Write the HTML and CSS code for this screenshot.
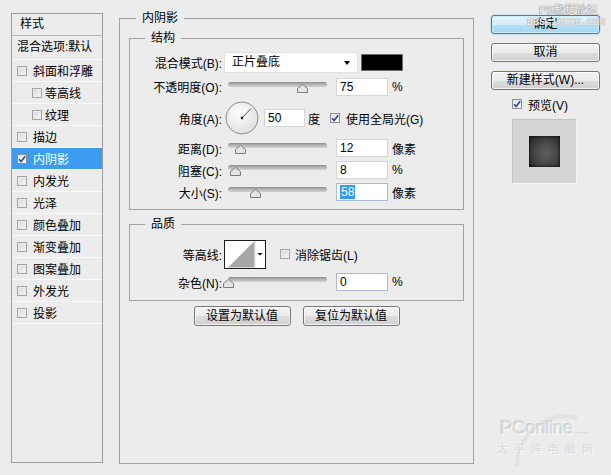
FILE: index.html
```html
<!DOCTYPE html>
<html lang="zh-CN">
<head>
<meta charset="utf-8">
<title>图层样式</title>
<link rel="stylesheet" href="styles.css">
</head>
<body>
<div class="dialog">
  <div class="styles-list">
    <div class="list-head">样式</div>
    <div class="list-blend">混合选项:默认</div>
    <div class="list-item"><span class="cb"></span>斜面和浮雕</div>
    <div class="list-item sub"><span class="cb"></span>等高线</div>
    <div class="list-item sub"><span class="cb"></span>纹理</div>
    <div class="list-item"><span class="cb"></span>描边</div>
    <div class="list-item active"><span class="cb on"><svg width="8" height="8" viewBox="0 0 8 8"><path d="M1 4.2 L3.1 6.6 L7.2 1.2" fill="none" stroke="#2b4a80" stroke-width="1.6"/></svg></span>内阴影</div>
    <div class="list-item"><span class="cb"></span>内发光</div>
    <div class="list-item"><span class="cb"></span>光泽</div>
    <div class="list-item"><span class="cb"></span>颜色叠加</div>
    <div class="list-item"><span class="cb"></span>渐变叠加</div>
    <div class="list-item"><span class="cb"></span>图案叠加</div>
    <div class="list-item"><span class="cb"></span>外发光</div>
    <div class="list-item"><span class="cb"></span>投影</div>
  </div>

  <fieldset class="group main">
    <legend>内阴影</legend>
    <fieldset class="group structure">
      <legend>结构</legend>
      <div class="row r-blend">
        <span class="lbl">混合模式(B):</span>
        <div class="select">正片叠底<span class="arrow"></span></div>
        <div class="swatch"></div>
      </div>
      <div class="row r-opacity">
        <span class="lbl">不透明度(O):</span>
        <div class="slider"><span class="thumb" style="left:69px"><svg width="11" height="9" viewBox="0 0 11 9"><path d="M0.5 8.5V4.5L5.5 0.5L10.5 4.5V8.5Z" fill="#e4e4e4" stroke="#7c7c7c"/></svg></span></div>
        <div class="field">75</div>
        <span class="unit">%</span>
      </div>
      <div class="row r-angle">
        <span class="lbl">角度(A):</span>
        <svg class="dial" width="34" height="34" viewBox="0 0 34 34">
          <defs>
            <radialGradient id="dialfill" cx="40%" cy="35%" r="70%">
              <stop offset="0" stop-color="#ffffff"/>
              <stop offset="1" stop-color="#dedede"/>
            </radialGradient>
          </defs>
          <circle cx="17" cy="17" r="16" fill="url(#dialfill)" stroke="#8c8c8c"/>
          <line x1="17" y1="17" x2="26" y2="7.5" stroke="#555" stroke-width="1"/>
          <circle cx="17" cy="17" r="1.4" fill="#333"/>
        </svg>
        <div class="field angle">50</div>
        <span class="unit deg">度</span>
        <span class="cb on global"><svg width="8" height="8" viewBox="0 0 8 8"><path d="M1 4.2 L3.1 6.6 L7.2 1.2" fill="none" stroke="#2b4a80" stroke-width="1.6"/></svg></span>
        <span class="cb-text">使用全局光(G)</span>
      </div>
      <div class="row r-slider">
        <span class="lbl">距离(D):</span>
        <div class="slider"><span class="thumb" style="left:7px"><svg width="11" height="9" viewBox="0 0 11 9"><path d="M0.5 8.5V4.5L5.5 0.5L10.5 4.5V8.5Z" fill="#e4e4e4" stroke="#7c7c7c"/></svg></span></div>
        <div class="field">12</div>
        <span class="unit">像素</span>
      </div>
      <div class="row r-slider">
        <span class="lbl">阻塞(C):</span>
        <div class="slider"><span class="thumb" style="left:2px"><svg width="11" height="9" viewBox="0 0 11 9"><path d="M0.5 8.5V4.5L5.5 0.5L10.5 4.5V8.5Z" fill="#e4e4e4" stroke="#7c7c7c"/></svg></span></div>
        <div class="field">8</div>
        <span class="unit">%</span>
      </div>
      <div class="row r-slider">
        <span class="lbl">大小(S):</span>
        <div class="slider"><span class="thumb" style="left:22px"><svg width="11" height="9" viewBox="0 0 11 9"><path d="M0.5 8.5V4.5L5.5 0.5L10.5 4.5V8.5Z" fill="#e4e4e4" stroke="#7c7c7c"/></svg></span></div>
        <div class="field focus"><span class="sel">58</span></div>
        <span class="unit">像素</span>
      </div>
    </fieldset>

    <fieldset class="group quality">
      <legend>品质</legend>
      <div class="row r-contour">
        <span class="lbl">等高线:</span>
        <svg class="contour" width="42" height="29" viewBox="0 0 42 29">
          <rect x="0.5" y="0.5" width="41" height="28" fill="#fff" stroke="#1c1c1c"/>
          <path d="M4 27.5 L30.5 1 L30.5 27.5 Z" fill="#a6a6a6"/>
          <line x1="31" y1="1" x2="31" y2="28" stroke="#d8d8d8"/>
          <path d="M33.5 13 H38.5 L36 15.5 Z" fill="#000"/>
        </svg>
        <span class="cb aa"></span>
        <span class="cb-text">消除锯齿(L)</span>
      </div>
      <div class="row r-noise">
        <span class="lbl">杂色(N):</span>
        <div class="slider"><span class="thumb" style="left:-5px"><svg width="11" height="9" viewBox="0 0 11 9"><path d="M0.5 8.5V4.5L5.5 0.5L10.5 4.5V8.5Z" fill="#e4e4e4" stroke="#7c7c7c"/></svg></span></div>
        <div class="field focus">0</div>
        <span class="unit">%</span>
      </div>
    </fieldset>

    <div class="reset-row">
      <button class="btn small">设置为默认值</button>
      <button class="btn small">复位为默认值</button>
    </div>
  </fieldset>

  <div class="side">
    <button class="btn default">确定</button>
    <button class="btn">取消</button>
    <button class="btn">新建样式(W)...</button>
    <div class="preview-row"><span class="cb on"><svg width="8" height="8" viewBox="0 0 8 8"><path d="M1 4.2 L3.1 6.6 L7.2 1.2" fill="none" stroke="#2b4a80" stroke-width="1.6"/></svg></span><span class="cb-text">预览(V)</span></div>
    <div class="preview-box"><div class="preview-swatch"></div></div>
  </div>
</div>

<div class="wm-ps">PS教程论坛</div>
<div class="wm-bbs">BBS.16XX8.COM</div>
<div class="wm-pc">
  <svg class="wm-arc" width="110" height="60" viewBox="0 0 110 60"><path d="M20 58 C 20 20, 60 2, 80 10" fill="none" stroke="#e2e2e2" stroke-width="4"/></svg>
  <div class="wm-pc-name">PConline<span class="dots">......</span></div>
  <div class="wm-pc-cn">太平洋电脑网</div>
</div>
</body>
</html>
```

FILE: styles.css
```css
* { box-sizing: border-box; }
html, body { margin: 0; padding: 0; }
body {
  width: 611px;
  height: 475px;
  overflow: hidden;
  position: relative;
  background: #ececec;
  font-family: "Liberation Sans", "Noto Sans CJK SC", sans-serif;
  font-size: 12px;
  color: #000;
}

.dialog {
  display: flex;
  align-items: flex-start;
  padding-left: 11px;
}

/* ---------- left list ---------- */
.styles-list {
  flex: none;
  margin-top: 13px;
  width: 92px;
  height: 450px;
  border: 1px solid #9d9d9d;
  background: #ececec;
}
.list-head {
  height: 22px;
  line-height: 21px;
  padding-left: 8px;
  border-bottom: 1px solid #b4b4b4;
}
.list-blend {
  height: 24px;
  line-height: 23px;
  padding-left: 5px;
  border-bottom: 1px solid #f9f9f9;
  white-space: nowrap;
}
.list-item {
  height: 22px;
  display: flex;
  align-items: center;
  padding-left: 5px;
  border-bottom: 1px solid #fafafa;
  white-space: nowrap;
}
.list-item .cb { margin-right: 6px; }
.list-item.sub { padding-left: 20px; }
.list-item.sub .cb { margin-right: 3px; }
.list-item.active {
  background: #3d9cf0;
  color: #fff;
}

/* checkbox */
.cb {
  flex: none;
  display: inline-block;
  width: 10px;
  height: 10px;
  border: 1px solid #a4a4a4;
  background: linear-gradient(135deg, #d6d6d6, #f8f8f8);
  box-shadow: inset 0 0 0 1px #ececec;
}
.cb.on {
  background: linear-gradient(135deg, #dfe6ee, #f8f9fb);
  border-color: #8e8e8e;
  box-shadow: none;
}
.cb svg { display: block; }

/* ---------- group boxes ---------- */
fieldset.group {
  margin: 0;
  border: 1px solid #a2a2a2;
  min-width: 0;
}
fieldset.group > legend {
  padding: 0 6px;
  height: 18px;
  line-height: 18px;
}
fieldset.main {
  flex: none;
  margin: 9px 0 0 16px;
  width: 355px;
  height: 455px;
  padding: 0 9px;
}
fieldset.main > legend { margin-left: 7px; }
fieldset.structure {
  margin-top: 2px;
  padding: 3px 0 6px;
}
fieldset.structure > legend,
fieldset.quality > legend { margin-left: 15px; }
fieldset.quality {
  margin-top: 5px;
  padding: 5px 0 6px;
}

.row {
  display: flex;
  align-items: center;
  white-space: nowrap;
}
.lbl {
  flex: none;
  width: 92px;
  margin-right: 2px;
  text-align: right;
}
.r-blend { height: 24px; }
.r-opacity { height: 25px; }
.r-angle { height: 38px; }
.r-slider { height: 22px; }
.r-contour { height: 32px; }
.r-noise { height: 24px; }

.select {
  position: relative;
  width: 134px;
  height: 21px;
  line-height: 19px;
  padding-left: 7px;
  background: #fff;
  border: 1px solid #e0e0e0;
}
.select .arrow {
  position: absolute;
  right: 7px;
  top: 8px;
  border-top: 4px solid #000;
  border-left: 3px solid transparent;
  border-right: 3px solid transparent;
}
.swatch {
  margin-left: 3px;
  width: 42px;
  height: 17px;
  background: #000;
  border: 1px solid #6e6e6e;
}

.slider {
  position: relative;
  margin-left: 4px;
  width: 99px;
  height: 12px;
  flex: none;
}
.slider::before {
  content: "";
  position: absolute;
  left: 0;
  right: 0;
  top: 1px;
  height: 5px;
  border-radius: 3px;
  background: linear-gradient(#8a8a8a, #b4b4b4 45%, #d2d2d2);
}
.thumb {
  position: absolute;
  top: 3px;
  width: 11px;
  height: 9px;
}
.thumb svg { display: block; }

.field {
  margin-left: 9px;
  width: 52px;
  height: 18px;
  line-height: 16px;
  padding-left: 3px;
  background: #fff;
  border: 1px solid #d6d6d6;
}
.field.focus { border-color: #a9bcd4; }
.field .sel {
  background: #3399ff;
  color: #fff;
  padding: 0 1px;
}
.unit { margin-left: 4px; }

.dial { display: block; margin-left: 1px; flex: none; }
.field.angle { margin-left: 5px; width: 41px; }
.unit.deg { margin-left: 3px; }
.cb.global { margin-left: 10px; }
.cb-text { margin-left: 6px; }

.contour { display: block; flex: none; }
.cb.aa { margin-left: 14px; }
.r-contour .cb-text { margin-left: 5px; }

.reset-row {
  display: flex;
  justify-content: center;
  gap: 12px;
  margin-top: 5px;
}

/* ---------- buttons ---------- */
.btn {
  font: inherit;
  color: #000;
  padding: 0;
  border: 1px solid #767676;
  border-radius: 3px;
  background: linear-gradient(#f3f3f3 0%, #ebebeb 50%, #dddddd 51%, #d0d0d0 100%);
  box-shadow: inset 0 0 0 1px rgba(255, 255, 255, 0.75);
  white-space: nowrap;
}
.btn.small { width: 97px; height: 20px; line-height: 18px; }

.side {
  flex: none;
  margin-left: 17px;
  margin-top: 15px;
  width: 109px;
  display: flex;
  flex-direction: column;
}
.side .btn {
  width: 109px;
  height: 19px;
  line-height: 17px;
  margin-bottom: 9px;
}
.side .btn.default {
  border-color: #3c7fb1;
  background: linear-gradient(#e6f4fc, #d2ecfb 50%, #b6e0f8 51%, #a4d6f2);
  box-shadow: 0 0 2px #86c6ea, inset 0 0 0 1px #cdeefc;
}
.preview-row {
  margin-top: -3px;
  height: 16px;
  display: flex;
  align-items: center;
  padding-left: 21px;
}
.preview-box {
  margin-top: 7px;
  margin-left: 21px;
  width: 65px;
  height: 65px;
  background: #d5d5d5;
  border: 1px solid #c2c2c2;
  border-right-color: #f2f2f2;
  border-bottom-color: #fafafa;
  display: flex;
  align-items: center;
  justify-content: center;
}
.preview-swatch {
  width: 31px;
  height: 31px;
  background: radial-gradient(circle at 55% 55%, #5e5e5e 0%, #474747 45%, #2a2a2a 85%, #1a1a1a 100%);
  box-shadow: inset 0 0 3px #000;
}

/* ---------- watermarks ---------- */
.wm-ps {
  position: absolute;
  left: 539px;
  top: 3px;
  font-size: 11px;
  line-height: 14px;
  color: #f6f6f6;
  text-shadow: 0 0 1px #6f6f6f, 0 0 1px #6f6f6f;
}
.wm-bbs {
  position: absolute;
  left: 527px;
  top: 17px;
  font-family: "Liberation Mono", monospace;
  font-weight: bold;
  font-size: 10px;
  line-height: 12px;
  color: rgba(255, 255, 255, 0.85);
  text-shadow: 0 0 1px #6a6a6a;
}
.wm-pc {
  position: absolute;
  left: 497px;
  top: 416px;
  width: 110px;
  height: 55px;
}
.wm-arc { position: absolute; left: 0; top: -8px; }
.wm-pc-name {
  position: relative;
  margin-left: 3px;
  font-size: 19px;
  line-height: 24px;
  letter-spacing: -0.5px;
  color: #dcdcdc;
  text-shadow: 1px 1px 0 #fbfbfb, -1px -1px 0 #cfcfcf;
}
.wm-pc-name .dots { font-size: 10px; letter-spacing: 0; }
.wm-pc-cn {
  position: relative;
  font-size: 11px;
  line-height: 13px;
  letter-spacing: 6px;
  color: #d8d8d8;
  text-shadow: 1px 1px 0 #fbfbfb;
}
```
